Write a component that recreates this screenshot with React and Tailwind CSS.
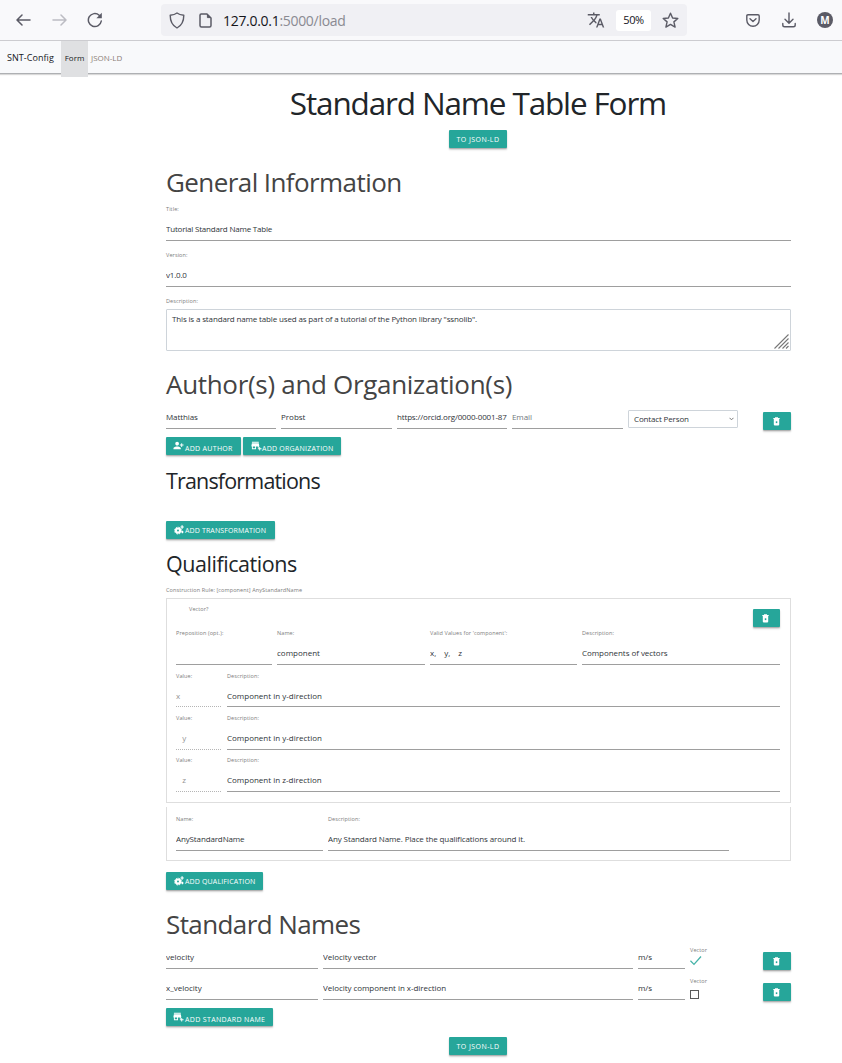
import React from "react";
import { MdPersonAdd, MdAddBusiness, MdTranslate } from "react-icons/md";

const button =
  "flex h-[18px] shrink-0 items-center rounded-[1px] bg-[#26a69a] text-[7px] leading-[18px] text-white whitespace-nowrap shadow-[0_1px_1px_rgba(0,0,0,0.2),0_2px_2px_rgba(0,0,0,0.16)]";
const label = "block whitespace-nowrap text-[5.5px] text-[#7c7c7c] tracking-[0.1px]";
const value = "overflow-hidden whitespace-pre border-b border-[#9e9e9e] text-[8px] text-[#2f3439]";

function Field({ title, text, className = "", valueClass = "tracking-[-0.05px]" }) {
  return (
    <div className={className}>
      <span className={label + " h-[18px] leading-[18px]"}>{title}</span>
      <div className={value + " h-[23px] leading-[22px] " + valueClass}>{text}</div>
    </div>
  );
}

function Input({ text, className = "" }) {
  return <div className={value + " h-[23px] leading-[22px] " + className}>{text}</div>;
}

function Trash({ className = "w-[28px]" }) {
  return (
    <button className={button + " justify-center " + className}>
      <svg className="-ml-0.5" width="7" height="9" viewBox="0 0 7 9">
        <path d="M0.3 1H2V0.3H5V1H6.7V2H0.3Z" fill="#fff" />
        <path d="M0.8 2H6.2V7.6Q6.2 8.6 5.2 8.6H1.8Q0.8 8.6 0.8 7.6Z" fill="#fff" />
        <rect x="2.8" y="4.3" width="1.5" height="1.8" fill="#26a69a" />
      </svg>
    </button>
  );
}

function GearIcon() {
  return (
    <svg className="mr-px shrink-0" width="10" height="10" viewBox="0 0 10 10" fill="none" stroke="#fff">
      <circle cx="4" cy="5.6" r="2.1" strokeWidth="2.2" />
      <circle cx="4" cy="5.6" r="3.4" strokeWidth="1" strokeDasharray="1.6 1.07" />
      <path d="M8.1 0.3V3.7M6.4 2H9.8M8.4 5.8V8.2M7.2 7H9.6" strokeWidth="1.2" />
    </svg>
  );
}

function JsonButton({ className = "" }) {
  return (
    <button className={button + " mr-px w-[58px] justify-center self-center pt-0.5 tracking-[0.45px] " + className}>
      TO JSON-LD
    </button>
  );
}

function SectionTitle({ className = "", children }) {
  return (
    <h2 className={"h-[36px] whitespace-nowrap text-[26px] leading-[36px] text-[#444] " + className}>{children}</h2>
  );
}

function ValueRow({ name, text, labelClass, valueClass }) {
  return (
    <div className="flex gap-[6px]">
      <div className="w-[45px]">
        <span className={label + " " + labelClass}>Value:</span>
        <div className={"whitespace-pre border-b border-dotted border-[#b5b5b5] text-[8px] text-[#949494] " + valueClass}>
          {name}
        </div>
      </div>
      <div className="w-[553px]">
        <span className={label + " " + labelClass}>Description:</span>
        <div className={value + " " + valueClass}>{text}</div>
      </div>
    </div>
  );
}

function NameRow({ name, description, checked }) {
  return (
    <div className="flex h-[31px] gap-[5px] pt-1">
      <Input className="w-[152px]" text={name} />
      <Input className="w-[310px] tracking-[-0.05px]" text={description} />
      <Input className="w-[47px] tracking-[-0.1px]" text="m/s" />
      <div className="w-[68px]">
        <span className={label + " h-[8px] leading-[8px]"}>Vector</span>
        {checked ? (
          <svg className="mt-px" width="12" height="11" viewBox="0 0 12 11" fill="none" stroke="#45b3a8" strokeWidth="1.3">
            <path d="M0.4 5.8 L4 9.4 L11 1.5" />
          </svg>
        ) : (
          <div className="mt-[5px] h-[9px] w-[9px] border border-[#5a5a5a]" />
        )}
      </div>
      <div className="pt-[6px]">
        <Trash />
      </div>
    </div>
  );
}

function BrowserBar() {
  return (
    <header className="flex h-[41px] items-center border-b border-[#ccccd0] bg-[#f9f9fb] text-[#5b5b66]">
      <svg className="ml-[16px]" width="15" height="14" viewBox="0 0 15 14" fill="none" stroke="#5b5b66" strokeWidth="1.5">
        <path d="M14 7H1.2M6 2L1 7L6 12" strokeLinejoin="round" strokeLinecap="round" />
      </svg>
      <svg className="ml-[21px]" width="15" height="14" viewBox="0 0 15 14" fill="none" stroke="#bcbcc3" strokeWidth="1.5">
        <path d="M1 7H13.8M9 2L14 7L9 12" strokeLinejoin="round" strokeLinecap="round" />
      </svg>
      <svg className="ml-[20px]" width="16" height="16" viewBox="0 0 16 16" fill="none" stroke="#5b5b66" strokeWidth="1.5">
        <path d="M14.3 9A6.5 6.5 0 1 1 12.2 3.2L13.2 4.2" strokeLinecap="round" />
        <path d="M14.8 0.8V6.2H9.4Z" fill="#5b5b66" stroke="none" />
      </svg>
      <div className="ml-[58px] flex h-[32px] w-[526px] items-center rounded bg-[#f0f0f4]">
        <svg className="ml-[8px]" width="16" height="17" viewBox="0 0 16 17" fill="none" stroke="#5b5b66" strokeWidth="1.4">
          <path d="M8 1C9.8 2.4 12 3 14.8 3.3C14.8 9.5 12.7 13.6 8 16C3.3 13.6 1.2 9.5 1.2 3.3C4 3 6.2 2.4 8 1Z" strokeLinejoin="round" />
        </svg>
        <svg className="ml-[14px]" width="13" height="15" viewBox="0 0 13 15" fill="none" stroke="#5b5b66" strokeWidth="1.5">
          <path d="M2.2 1H8L12 5V12.5Q12 14 10.5 14H2.5Q1 14 1 12.5V2.2Q1 1 2.2 1Z" strokeLinejoin="round" />
          <path d="M8.4 1.5V4.6H11.5Z" fill="#5b5b66" strokeWidth="1" />
        </svg>
        <span className="ml-[11px] w-[364px] whitespace-nowrap pt-0.5 text-[14px] leading-[18px] text-[#8a8a92] tracking-[-0.3px]">
          <span className="text-[#15141a]">127.0.0.1</span>:5000/load
        </span>
        <MdTranslate size={18} className="shrink-0" />
        <span className="ml-[11px] flex h-[21px] w-[35px] shrink-0 items-center justify-center rounded-[3px] bg-white pt-px text-[11px] text-[#15141a] tracking-[-0.4px]">
          50%
        </span>
        <svg className="ml-[11px] shrink-0" width="17" height="17" viewBox="0 0 17 17" fill="none" stroke="#5b5b66" strokeWidth="1.4">
          <path d="M8.5 1.2L10.6 6L15.8 6.5L11.9 9.9L13.1 15.1L8.5 12.4L3.9 15.1L5.1 9.9L1.2 6.5L6.4 6Z" strokeLinejoin="round" />
        </svg>
      </div>
      <svg className="ml-[59px]" width="14" height="13" viewBox="0 0 14 13" fill="none" stroke="#5b5b66" strokeWidth="1.4" strokeLinecap="round" strokeLinejoin="round">
        <path d="M2 0.8H12Q13.2 0.8 13.2 2V6A6.2 6.2 0 0 1 0.8 6V2Q0.8 0.8 2 0.8Z" />
        <path d="M4 4.8L7 7.6L10 4.8" />
      </svg>
      <svg className="ml-[22px]" width="14" height="16" viewBox="0 0 14 16" fill="none" stroke="#5b5b66" strokeWidth="1.4" strokeLinecap="round" strokeLinejoin="round">
        <path d="M7 1V11M3 7.2L7 11.2L11 7.2M0.8 11.5V13Q0.8 14.8 2.6 14.8H11.4Q13.2 14.8 13.2 13V11.5" />
      </svg>
      <span className="ml-[21px] flex h-4 w-4 items-center justify-center rounded-full bg-[#5b5b66] text-[10px] font-bold text-white">
        M
      </span>
    </header>
  );
}

export default function App() {
  return (
    <div className="h-[1063px] w-[842px] overflow-hidden bg-white font-['Open_Sans','Noto_Sans',sans-serif]">
      <BrowserBar />
      <nav className="flex h-[33px] border-b border-[#aeb0b3] bg-[#f8f9fb] leading-[33px] shadow-[0_1px_1px_rgba(0,0,0,0.15)]">
        <span className="ml-[7px] w-[54px] whitespace-nowrap text-[9px] text-[#16181b] tracking-[0.05px]">SNT-Config</span>
        <span className="h-[36px] w-[27px] bg-[#dfe0e2] text-center text-[8px] text-[#16181b]">Form</span>
        <span className="ml-[3px] text-[8px] text-[#8b7f78] tracking-[0px]">JSON-LD</span>
      </nav>
      <main className="ml-[166px] flex w-[625px] flex-col">
        <h1 className="h-[56px] whitespace-nowrap pr-px text-center text-[31.5px] leading-[57px] text-[#212529] tracking-[-1.15px]">
          Standard Name Table Form
        </h1>
        <JsonButton />

        <SectionTitle className="mt-4 tracking-[-0.58px]">General Information</SectionTitle>
        <Field title="Title:" text="Tutorial Standard Name Table" valueClass="tracking-[-0.2px]" />
        <Field className="mt-[5px]" title="Version:" text="v1.0.0" valueClass="tracking-[-0.2px]" />
        <span className={label + " mt-[5px] h-[17px] leading-[18px]"}>Description:</span>
        <div className="flex h-[42px] justify-between rounded-[1px] border border-[#ced4da] pl-[5px] text-[8px] leading-[18px] text-[#2f3439]">
          <span className="whitespace-nowrap tracking-[-0.145px]">
            This is a standard name table used as part of a tutorial of the Python library "ssnolib".
          </span>
          <svg className="mr-px mb-px self-end" width="15" height="15" viewBox="0 0 15 15" stroke="#777" strokeWidth="1.1">
            <path d="M0.5 14.5L14.5 0.5M4.5 14.5L14.5 4.5M8.5 14.5L14.5 8.5M12 14.5L14.5 12" />
          </svg>
        </div>

        <SectionTitle className="mt-[15px] tracking-[-0.31px]">Author(s) and Organization(s)</SectionTitle>
        <div className="flex h-[35px] gap-[5px] pt-1">
          <Input className="w-[110px] tracking-[-0.1px]" text="Matthias" />
          <Input className="w-[111px]" text="Probst" />
          <Input className="w-[110px] tracking-[-0.16px]" text="https://orcid.org/0000-0001-87" />
          <Input className="w-[111px] text-[#72777c] tracking-[-0.1px]" text="Email" />
          <div className="mt-1 flex h-[18px] w-[110px] items-center justify-between rounded-[1px] border border-[#ced4da] pr-[3px] pl-[5px] text-[8px] leading-[16px] text-[#2f3439] tracking-[-0.15px]">
            Contact Person
            <svg width="5" height="4" viewBox="0 0 5 4" fill="none" stroke="#777" strokeWidth="1">
              <path d="M0.5 0.8L2.5 2.8L4.5 0.8" />
            </svg>
          </div>
          <div className="ml-auto pt-[6px]">
            <Trash />
          </div>
        </div>
        <div className="flex gap-[2px]">
          <button className={button + " w-[75px] pl-[7px] tracking-[0.3px]"}>
            <MdPersonAdd size={11} className="mr-px -mt-0.5 -scale-x-100" />
            <span className="pt-[5px]">ADD AUTHOR</span>
          </button>
          <button className={button + " w-[98px] pl-[8px] tracking-[0.23px]"}>
            <MdAddBusiness size={11} className="-mt-0.5" />
            <span className="pt-[5px]">ADD ORGANIZATION</span>
          </button>
        </div>

        <h3 className="mt-[11px] h-7 text-[21.5px] leading-[30px] text-[#212529] tracking-[-0.83px]">Transformations</h3>
        <button className={button + " mt-[27px] w-[109px] pl-[8px] tracking-[0.13px]"}>
          <GearIcon />
          <span className="pt-0.5">ADD TRANSFORMATION</span>
        </button>

        <h3 className="mt-[10px] h-7 text-[21.5px] leading-[30px] text-[#212529] tracking-[-0.45px]">Qualifications</h3>
        <span className={label + " mt-1 h-[17px] leading-[18px]"}>Construction Rule: [component] AnyStandardName</span>

        <section className="h-[205px] border border-[#dedede] pr-[10px] pl-[9px]">
          <div className="flex h-[25px] justify-between">
            <span className={label + " ml-[13px] leading-[20px]"}>Vector?</span>
            <Trash className="mt-[10px] w-[27px]" />
          </div>
          <div className="flex gap-[5px]">
            <Field className="w-[96px]" title="Preposition (opt.):" text=" " />
            <Field className="w-[148px]" title="Name:" text="component" valueClass="tracking-[0px]" />
            <Field className="w-[147px]" title={"Valid Values for 'component':"} text="x,    y,    z" />
            <Field className="w-[198px]" title="Description:" text="Components of vectors" />
          </div>
          <ValueRow name="x" text="Component in y-direction" labelClass="h-[21px] leading-[22px]" valueClass="h-[21px] leading-[20px]" />
          <ValueRow name="   y" text="Component in y-direction" labelClass="h-[21px] leading-[22px]" valueClass="h-[22px] leading-[20px]" />
          <ValueRow name="   z" text="Component in z-direction" labelClass="h-[20px] leading-[20px]" valueClass="h-[22px] leading-[20px]" />
        </section>
        <section className="mt-1 flex h-[54px] gap-[5px] border-x border-b border-[#dedede] pt-[3px] pl-[9px]">
          <Field className="w-[147px]" title="Name:" text="AnyStandardName" valueClass="tracking-[-0.13px]" />
          <Field
            className="w-[401px]"
            title="Description:"
            text="Any Standard Name. Place the qualifications around it."
            valueClass="tracking-[-0.11px]"
          />
        </section>
        <button className={button + " mt-[11px] w-[97px] pl-[8px] tracking-[0.15px]"}>
          <GearIcon />
          <span className="pt-0.5">ADD QUALIFICATION</span>
        </button>

        <SectionTitle className="mt-4 tracking-[-0.6px]">Standard Names</SectionTitle>
        <NameRow name="velocity" description="Velocity vector" checked />
        <NameRow name="x_velocity" description="Velocity component in x-direction" />
        <button className={button + " mt-1 w-[107px] pl-[7px] tracking-[0.35px]"}>
          <MdAddBusiness size={11} className="mr-px -mt-0.5" />
          <span className="pt-[5px]">ADD STANDARD NAME</span>
        </button>
        <JsonButton className="mt-[11px]" />
      </main>
    </div>
  );
}
